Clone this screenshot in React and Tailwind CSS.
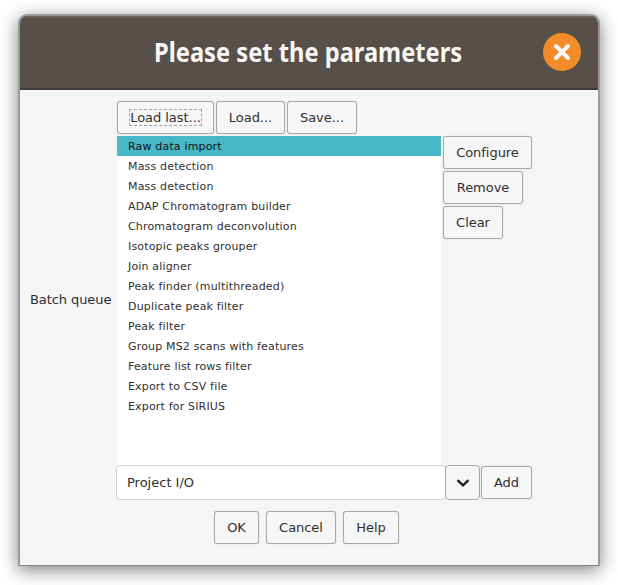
import React from 'react';

const steps = [
  'Raw data import',
  'Mass detection',
  'Mass detection',
  'ADAP Chromatogram builder',
  'Chromatogram deconvolution',
  'Isotopic peaks grouper',
  'Join aligner',
  'Peak finder (multithreaded)',
  'Duplicate peak filter',
  'Peak filter',
  'Group MS2 scans with features',
  'Feature list rows filter',
  'Export to CSV file',
  'Export for SIRIUS',
];

function Button({ width, focused, children }) {
  return (
    <button
      className={`${width} flex h-[33px] shrink-0 items-center justify-center rounded-[3px] border border-[#a8a8a8] bg-[#f6f6f6] text-[13px] leading-[15px] tracking-[-0.04px] whitespace-nowrap shadow-[0_0_1px_#bbbbbb]`}
    >
      <span className={focused ? 'outline-1 outline-dashed outline-[#a5a5a5]' : ''}>{children}</span>
    </button>
  );
}

export default function App() {
  return (
    <div className="h-[585px] w-[618px] overflow-hidden bg-white pt-[14px] pl-[18px] font-['DejaVu_Sans',sans-serif] text-[13px] text-[#303030]">
      <div className="flex h-[552px] w-[582px] flex-col overflow-hidden rounded-t-[9px] border-2 border-b border-[#999b9b] border-b-[#858585] bg-[#f5f5f5] shadow-[0_4px_18px_rgba(0,0,0,0.5)]">
        <header className="flex h-[74px] shrink-0 items-center justify-between border-t-2 border-b-2 border-t-[#685f59] border-b-[#443a38] bg-[#57504a] pr-[17px] pb-[2px] pl-[134px]">
          <h1 className="w-[308px] font-['Noto_Sans','Open_Sans',sans-serif] text-[27px] leading-[36px] font-bold whitespace-nowrap text-[#f8f7f5]">
            <span className="inline-block origin-left scale-x-[0.877]">Please set the parameters</span>
          </h1>
          <button className="flex size-[38px] items-center justify-center rounded-full bg-[#f28c2b]">
            <svg width="18" height="18" viewBox="0 0 18 18" fill="none" stroke="#f8f7f5" strokeWidth="4" strokeLinecap="round">
              <path d="M3 3l12 12M15 3L3 15" />
            </svg>
          </button>
        </header>
        <main className="flex flex-col pt-[11px]">
          <div className="flex">
            <div className="flex w-[97px] items-center pb-[1px] pl-[10px] tracking-[-0.08px]">Batch queue</div>
            <div className="flex flex-col">
              <div className="flex h-[35px] gap-[2px]">
                <Button width="w-[97px]" focused>Load last...</Button>
                <Button width="w-[69px]">Load...</Button>
                <Button width="w-[70px]">Save...</Button>
              </div>
              <div className="flex gap-[2px]">
                <ul className="h-[329px] w-[324px] bg-white text-[11px] leading-[20px] tracking-[0.17px]">
                  {steps.map((step, i) => (
                    <li key={i} className={i === 0 ? 'h-5 bg-[#48b8c8] pt-px pl-[11px] text-[#101010]' : 'h-5 pt-px pl-[11px]'}>
                      {step}
                    </li>
                  ))}
                </ul>
                <div className="flex flex-col gap-[2px]">
                  <Button width="w-[89px]">Configure</Button>
                  <Button width="w-[80px]">Remove</Button>
                  <Button width="w-[60px]">Clear</Button>
                </div>
              </div>
              <div className="-ml-px flex items-center">
                <div className="flex h-[35px] w-[330px] items-center rounded-[4px] border border-[#d2d2d2] bg-white pl-[10px]">Project I/O</div>
                <button className="-ml-px flex h-[35px] w-[35px] items-center justify-center rounded-[4px] border border-[#a8a8a8] bg-[#f6f6f6]">
                  <svg width="14" height="10" viewBox="0 0 14 10" fill="none" stroke="#222222" strokeWidth="2.5">
                    <path d="M1.5 2.2L7 7.3l5.5-5.1" />
                  </svg>
                </button>
                <div className="ml-[1px]">
                  <Button width="w-[51px]">Add</Button>
                </div>
              </div>
            </div>
          </div>
          <div className="mt-[11px] ml-[194px] flex gap-[7px]">
            <Button width="w-[45px]">OK</Button>
            <Button width="w-[70px]">Cancel</Button>
            <Button width="w-[56px]">Help</Button>
          </div>
        </main>
      </div>
    </div>
  );
}
